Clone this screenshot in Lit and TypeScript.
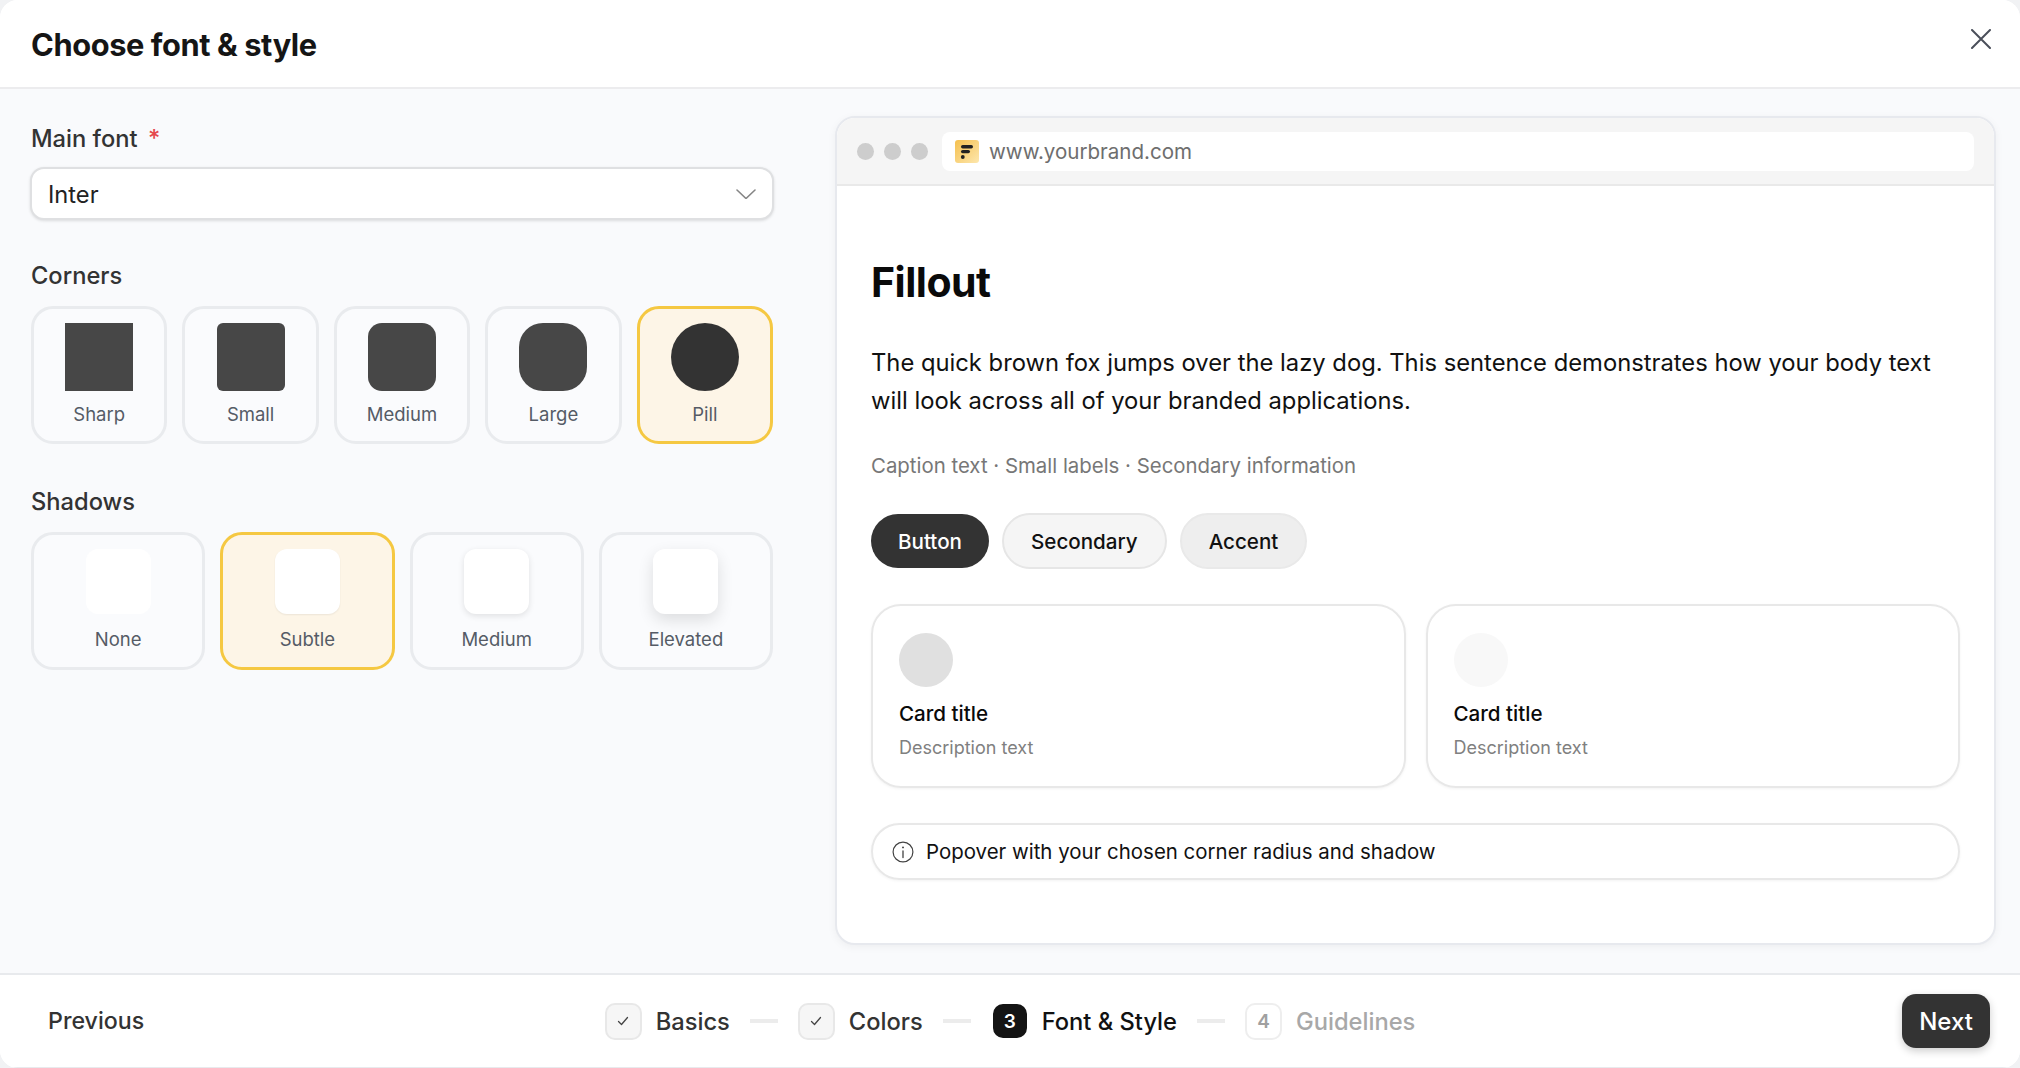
import { css, html, LitElement, svg } from 'lit';
import { customElement } from 'lit/decorators.js';

const CORNERS = [
  { name: 'Sharp', radius: 0 },
  { name: 'Small', radius: 6 },
  { name: 'Medium', radius: 14 },
  { name: 'Large', radius: 24 },
  { name: 'Pill', radius: 50, selected: true },
];

const SHADOWS = [
  { name: 'None', cls: 'none' },
  { name: 'Subtle', cls: 'subtle', selected: true },
  { name: 'Medium', cls: 'medium' },
  { name: 'Elevated', cls: 'elevated' },
];

const check = svg`<path d="M5.5 10.5 8.5 13.5 14.5 6.5" fill="none" stroke="#444" stroke-width="1.3" stroke-linecap="round" stroke-linejoin="round" />`;

@customElement('app-root')
export class AppRoot extends LitElement {
  static override styles = css`
    :host {
      display: flex;
      flex-direction: column;
      height: 1068px;
      width: 2020px;
      overflow: hidden;
      font-family: Inter, 'Liberation Sans', sans-serif;
      color: #111;
      background: #f1f2f4;
    }

    .modal {
      flex: 1;
      display: flex;
      flex-direction: column;
      min-height: 0;
      background: #fff;
      border-radius: 18px;
      overflow: hidden;
    }

    .header {
      flex: none;
      display: flex;
      justify-content: space-between;
      padding: 0 29px 0 31px;
      background: #fff;
      border-bottom: 2px solid #ececee;
      height: 87px;
    }

    .title {
      margin: 0;
      font-size: 30.8px;
      line-height: 90px;
      font-weight: 700;
      letter-spacing: -0.4px;
      color: #151515;
    }

    .close {
      margin-top: 29px;
      width: 20px;
      height: 20px;
    }

    .main {
      flex: 1;
      min-height: 0;
      display: flex;
      gap: 61px;
      padding: 27px 24px 0 30px;
      background: #f9fafc;
    }

    .left {
      width: 744px;
      flex: none;
      padding-top: 8px;
    }

    .label {
      padding-left: 1px;
      font-size: 23.7px;
      line-height: 30px;
      font-weight: 500;
      color: #333;
    }

    .label .req {
      color: #e5484d;
      margin-left: 4px;
    }

    .select {
      margin-top: 13px;
      height: 53px;
      box-sizing: border-box;
      display: flex;
      align-items: center;
      justify-content: space-between;
      padding: 1px 16px 0;
      background: #fff;
      border: 2px solid #dfe0e2;
      border-radius: 14px;
      box-shadow: 0 1px 3px rgba(0, 0, 0, 0.12);
      font-size: 23.7px;
      color: #222;
    }

    .section {
      margin-top: 41px;
    }

    .section.shadows {
      margin-top: 43px;
    }

    .tiles {
      display: flex;
      gap: 15px;
      margin: 15px 1px 0;
    }

    .tile {
      flex: 1;
      height: 138px;
      box-sizing: border-box;
      display: flex;
      flex-direction: column;
      align-items: center;
      padding-top: 14px;
      border: 3px solid #e9ebee;
      border-radius: 22px;
      background: #fafbfd;
    }

    .tile.selected {
      border-color: #f5c842;
      background: #fdf5e7;
    }

    .tile span {
      font-size: 18.5px;
      line-height: 24px;
      color: #555b66;
    }

    .corner {
      width: 68px;
      height: 68px;
      margin-bottom: 11px;
      background: #474747;
    }

    .tile.selected .corner {
      background: #333;
    }

    .shadow {
      width: 65px;
      height: 65px;
      margin-bottom: 13px;
      background: #fff;
      border-radius: 12px;
    }

    .shadow.subtle {
      box-shadow: 0 1px 2px rgba(0, 0, 0, 0.07);
    }

    .shadow.medium {
      box-shadow: 0 2px 6px rgba(0, 0, 0, 0.11);
    }

    .shadow.elevated {
      box-shadow: 0 6px 16px rgba(0, 0, 0, 0.12);
    }

    .preview {
      flex: 1;
      height: 829px;
      box-sizing: border-box;
      display: flex;
      flex-direction: column;
      background: #fff;
      border: 2px solid #e7e9ee;
      border-radius: 20px;
      box-shadow: 0 2px 8px rgba(0, 0, 0, 0.05);
      overflow: hidden;
    }

    .bar {
      flex: none;
      height: 66px;
      display: flex;
      align-items: center;
      padding: 0 20px;
      background: #f5f5f5;
      border-bottom: 2px solid #e9e9e9;
    }

    .dot {
      width: 17px;
      height: 17px;
      margin-right: 10px;
      border-radius: 50%;
      background: #cdcdcd;
    }

    .url {
      flex: 1;
      height: 39px;
      margin-left: 4px;
      display: flex;
      align-items: center;
      gap: 10px;
      padding-left: 13px;
      background: #fff;
      border-radius: 8px;
      font-size: 20.55px;
      color: #6e6e6e;
    }

    .favicon {
      width: 24px;
      height: 23px;
      flex: none;
    }

    .content {
      padding: 71px 34px 0 34px;
    }

    .content h1 {
      margin: 0;
      font-size: 41px;
      line-height: 50px;
      font-weight: 700;
      letter-spacing: -0.5px;
      color: #0a0a0a;
    }

    .body {
      margin: 37px 0 0;
      font-size: 23.78px;
      line-height: 38px;
      color: #111;
    }

    .caption {
      margin: 33px 0 0;
      font-size: 20.4px;
      line-height: 26px;
      color: #777;
    }

    .buttons {
      display: flex;
      align-items: center;
      gap: 13px;
      margin-top: 34px;
    }

    .btn {
      height: 56px;
      box-sizing: border-box;
      display: flex;
      align-items: center;
      padding: 0 27px;
      border-radius: 28px;
      font-size: 20.6px;
      font-weight: 500;
    }

    .btn.primary {
      height: 54px;
      background: #333;
      color: #fff;
    }

    .btn.secondary {
      background: #f5f5f5;
      border: 2px solid #e6e6e6;
    }

    .btn.accent {
      background: #eee;
      border: 2px solid #e9e9e9;
    }

    .cards {
      display: flex;
      gap: 20px;
      margin-top: 35px;
    }

    .card {
      flex: 1;
      box-sizing: border-box;
      height: 184px;
      padding: 27px 26px 0;
      border: 2px solid #e8e8e8;
      border-radius: 30px;
      box-shadow: 0 1px 3px rgba(0, 0, 0, 0.05);
    }

    .avatar {
      width: 54px;
      height: 54px;
      border-radius: 50%;
      background: #e0e0e0;
    }

    .avatar.light {
      background: #f8f8f8;
    }

    .card-title {
      margin-top: 14px;
      font-size: 20.6px;
      line-height: 26px;
      font-weight: 500;
      color: #0a0a0a;
    }

    .card-desc {
      margin-top: 9px;
      font-size: 18px;
      line-height: 24px;
      color: #808080;
    }

    .popover {
      margin-top: 35px;
      height: 57px;
      box-sizing: border-box;
      display: flex;
      align-items: center;
      gap: 12px;
      padding-left: 19px;
      border: 2px solid #e8e8e8;
      border-radius: 29px;
      box-shadow: 0 1px 3px rgba(0, 0, 0, 0.05);
      font-size: 20.45px;
      color: #111;
    }

    .footer {
      flex: none;
      height: 95px;
      box-sizing: border-box;
      display: grid;
      grid-template-columns: 1fr auto 1fr;
      align-items: center;
      padding: 0 30px;
      background: #fff;
      border-top: 2px solid #e8eaed;
      border-bottom: 1px solid #e8eaed;
    }

    .previous {
      padding-left: 18px;
      font-size: 23.2px;
      font-weight: 500;
      color: #333;
    }

    .stepper {
      display: flex;
      align-items: center;
    }

    .step {
      display: flex;
      align-items: center;
      gap: 14px;
      font-size: 23.7px;
      font-weight: 500;
      color: #333;
    }

    .badge {
      width: 37px;
      height: 37px;
      box-sizing: border-box;
      display: flex;
      align-items: center;
      justify-content: center;
      background: #f6f6f6;
      border: 2px solid #e8e8e8;
      border-radius: 10px;
      font-size: 19px;
      font-weight: 600;
    }

    .step.current {
      color: #111;
    }

    .step.current .badge {
      width: 34px;
      height: 34px;
      margin-left: 2px;
      margin-right: 1px;
      background: #141414;
      border-color: #141414;
      color: #fff;
    }

    .step.todo {
      color: #a8a8a8;
    }

    .step.todo .badge {
      background: #fff;
      border-color: #eee;
      color: #a0a0a0;
    }

    .line {
      width: 28px;
      height: 4px;
      margin: 0 20px;
      background: #ececec;
    }

    .next {
      justify-self: end;
      width: 88px;
      height: 54px;
      display: flex;
      align-items: center;
      justify-content: center;
      background: #333;
      color: #fff;
      border-radius: 14px;
      box-shadow: 0 3px 8px rgba(0, 0, 0, 0.2);
      font-size: 24px;
      font-weight: 500;
    }
  `;

  protected override render() {
    return html`
      <div class="modal">
        <div class="header">
          <h2 class="title">Choose font &amp; style</h2>
          <svg class="close" viewBox="0 0 20 20">
            <path d="M1 1 19 19M19 1 1 19" fill="none" stroke="#4a4f5a" stroke-width="2" stroke-linecap="round" />
          </svg>
        </div>
        <div class="main">
          <div class="left">
            <div class="label">Main font <span class="req">*</span></div>
            <div class="select">
              Inter
              <svg width="20" height="10" viewBox="0 0 20 10">
                <path d="M1 1 10 9.5 19 1" fill="none" stroke="#868686" stroke-width="1.6" stroke-linecap="round" stroke-linejoin="round" />
              </svg>
            </div>
            <div class="section label">Corners</div>
            <div class="tiles">
              ${CORNERS.map(
                (c) => html`
                  <div class="tile ${c.selected ? 'selected' : ''}">
                    <div class="corner" style="border-radius: ${c.radius === 50 ? '50%' : `${c.radius}px`}"></div>
                    <span>${c.name}</span>
                  </div>
                `
              )}
            </div>
            <div class="section shadows label">Shadows</div>
            <div class="tiles">
              ${SHADOWS.map(
                (s) => html`
                  <div class="tile ${s.selected ? 'selected' : ''}">
                    <div class="shadow ${s.cls}"></div>
                    <span>${s.name}</span>
                  </div>
                `
              )}
            </div>
          </div>
          <div class="preview">
            <div class="bar">
              <div class="dot"></div>
              <div class="dot"></div>
              <div class="dot"></div>
              <div class="url">
                <svg class="favicon" viewBox="0 0 24 23">
                  <defs>
                    <linearGradient id="fav" x1="0" y1="0" x2="1" y2="1">
                      <stop offset="0" stop-color="#f5c04e" />
                      <stop offset="1" stop-color="#fde7ae" />
                    </linearGradient>
                  </defs>
                  <rect width="24" height="23" rx="3" fill="url(#fav)" />
                  <rect x="6" y="5" width="12" height="3.4" rx="1.7" fill="#222" />
                  <rect x="6" y="10" width="9" height="3.2" rx="1.6" fill="#222" />
                  <circle cx="7.8" cy="17" r="1.9" fill="#222" />
                </svg>
                www.yourbrand.com
              </div>
            </div>
            <div class="content">
              <h1>Fillout</h1>
              <p class="body">
                The quick brown fox jumps over the lazy dog. This sentence demonstrates how your body text will look
                across all of your branded applications.
              </p>
              <p class="caption">Caption text · Small labels · Secondary information</p>
              <div class="buttons">
                <div class="btn primary">Button</div>
                <div class="btn secondary">Secondary</div>
                <div class="btn accent">Accent</div>
              </div>
              <div class="cards">
                <div class="card">
                  <div class="avatar"></div>
                  <div class="card-title">Card title</div>
                  <div class="card-desc">Description text</div>
                </div>
                <div class="card">
                  <div class="avatar light"></div>
                  <div class="card-title">Card title</div>
                  <div class="card-desc">Description text</div>
                </div>
              </div>
              <div class="popover">
                <svg width="22" height="22" viewBox="0 0 20 20">
                  <circle cx="10" cy="10" r="9" fill="none" stroke="#444" stroke-width="1.1" />
                  <path d="M10 9v6" stroke="#444" stroke-width="1.2" stroke-linecap="round" />
                  <circle cx="10" cy="5.8" r="0.9" fill="#444" />
                </svg>
                Popover with your chosen corner radius and shadow
              </div>
            </div>
          </div>
        </div>
        <div class="footer">
          <div class="previous">Previous</div>
          <div class="stepper">
            <div class="step">
              <div class="badge"><svg width="20" height="20" viewBox="0 0 20 20">${check}</svg></div>
              Basics
            </div>
            <div class="line"></div>
            <div class="step">
              <div class="badge"><svg width="20" height="20" viewBox="0 0 20 20">${check}</svg></div>
              Colors
            </div>
            <div class="line"></div>
            <div class="step current">
              <div class="badge">3</div>
              Font &amp; Style
            </div>
            <div class="line"></div>
            <div class="step todo">
              <div class="badge">4</div>
              Guidelines
            </div>
          </div>
          <div class="next">Next</div>
        </div>
      </div>
    `;
  }
}
